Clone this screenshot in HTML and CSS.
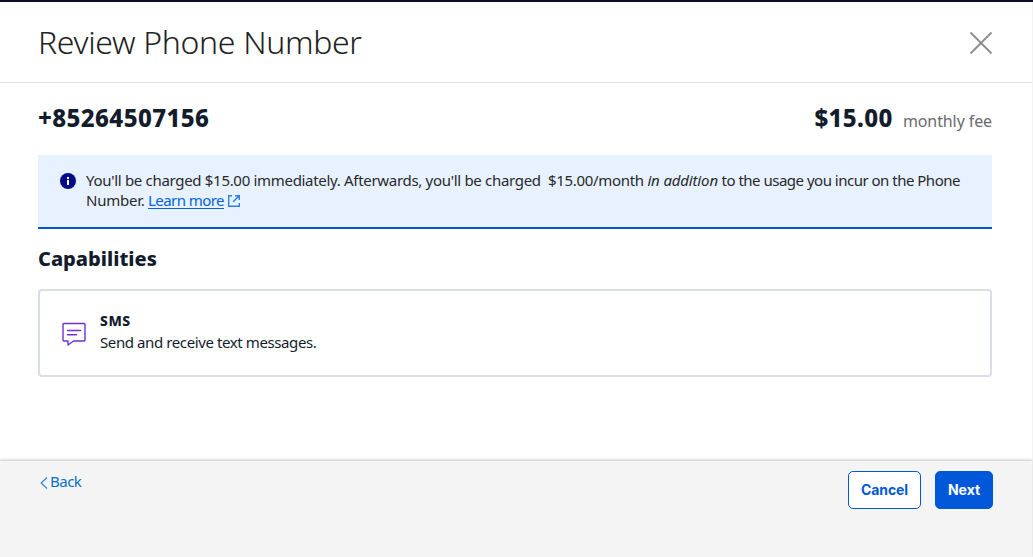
FILE: index.html
```html
<!DOCTYPE html>
<html lang="en">
<head>
<meta charset="utf-8">
<title>Review Phone Number</title>
<link rel="stylesheet" href="styles.css">
</head>
<body>
<div class="modal">
  <header class="modal-header">
    <h1 class="title"><span>Review Phone Number</span></h1>
    <svg class="close" width="24" height="24" viewBox="0 0 24 24" fill="none" stroke="#8c8c8c" stroke-width="1.8"><path d="M1.5 1.5l21 21M22.5 1.5l-21 21"/></svg>
  </header>
  <main class="content">
    <div class="summary">
      <h2 class="number">+85264507156</h2>
      <div class="price"><strong class="amount">$15.00</strong><span class="fee">monthly fee</span></div>
    </div>
    <div class="notice">
      <svg class="info" width="16" height="16" viewBox="0 0 16 16"><circle cx="8" cy="8" r="8" fill="#030b86"/><path d="M7 4h2v2H7zM7 7h2v5H7z" fill="#fff"/></svg>
      <div class="notice-text">
        <p class="line first">You'll be charged $15.00 immediately. Afterwards, you'll be charged&nbsp; $15.00/month <em>in addition</em> <span class="tail">to the usage you incur on the Phone</span></p>
        <p class="line"><span class="word">Number.</span> <a class="learn" href="#">Learn more</a><svg class="external" width="12" height="12" viewBox="0 0 12 12" fill="none" stroke="#2f80ee" stroke-width="1.4"><path d="M4 .7H.7v10.6h10.6V8M7 .7h4.3V5M11.2.8L5.2 6.8"/></svg></p>
      </div>
    </div>
    <h3 class="section-title"><span>Capabilities</span></h3>
    <div class="card">
      <svg class="sms-icon" width="24" height="24" viewBox="0 0 24 24" fill="none" stroke="#7030d0" stroke-width="1.4" stroke-linejoin="round" stroke-linecap="round"><path d="M2 1.5h20q1 0 1 1v15.500q0 1-1 1H11.500L6 23v-4H2q-1 0-1-1v-15.500q0-1 1-1zM5.500 8.500h13M5.500 12.800h9"/></svg>
      <div class="card-text">
        <h4 class="card-title">SMS</h4>
        <p class="card-desc">Send and receive text messages.</p>
      </div>
    </div>
  </main>
  <footer class="footer">
    <a class="back" href="#"><svg class="chevron" width="8" height="12" viewBox="0 0 8 12" fill="none" stroke="#2b86d2" stroke-width="1.2"><path d="M7 .5L1.2 6 7 11.500"/></svg><span>Back</span></a>
    <div class="actions">
      <button class="btn btn-cancel">Cancel</button>
      <button class="btn btn-next">Next</button>
    </div>
  </footer>
</div>
</body>
</html>
```
FILE: styles.css
```css
* { box-sizing: border-box; }
body { margin: 0; background: #f3f3f3; font-family: "Noto Sans", sans-serif; color: #121c2d; overflow: hidden; border-top: 2px solid #0d0c25; }
h1, h2, h3, h4, p { margin: 0; white-space: nowrap; }
.modal { height: 555px; margin-right: 1px; background: #fff; display: flex; flex-direction: column; }
.modal-header { height: 81px; display: flex; justify-content: space-between; align-items: center; padding: 2px 39px 0 38px; border-bottom: 1px solid #e0e0e0; }
.title { margin-bottom: 2px; font-size: 32px; line-height: 40px; font-weight: 300; letter-spacing: -0.33px; color: #222; }
.close { display: block; }
.content { flex: 1; padding: 19px 40px 0 38px; }
.summary { display: flex; justify-content: space-between; height: 53px; }
.number { font-size: 24px; line-height: 32px; font-weight: 800; letter-spacing: 0.4px; }
.price { display: flex; align-items: baseline; height: 32px; line-height: 32px; }
.amount { font-size: 24px; font-weight: 800; letter-spacing: 0.4px; }
.fee { margin-left: 10px; font-size: 16px; letter-spacing: -0.1px; color: #6b6b6b; }
.notice { height: 74px; display: flex; padding: 18px 22px 0; background: #e7f1ff; border-bottom: 2px solid #0058d8; color: #282a2b; }
.info { flex: none; }
.notice-text { margin-left: 10px; margin-top: -3px; font-size: 15px; line-height: 20px; }
.line { letter-spacing: -0.31px; }
.line em { letter-spacing: -0.15px; }
.tail { letter-spacing: -0.5px; }
.word { letter-spacing: -0.25px; }
.learn { color: #0263e0; letter-spacing: -0.56px; text-underline-offset: 2px; }
.external { margin-left: 4px; vertical-align: -1px; }
.section-title { margin-top: 16px; font-size: 20px; line-height: 28px; font-weight: 800; }
.card { height: 88px; margin-top: 16px; padding: 0 22px; display: flex; align-items: center; border: 2px solid #dadde5; border-radius: 4px; }
.sms-icon { margin-top: 2px; }
.card-text { margin-left: 14px; margin-bottom: 2px; }
.card-title { font-size: 14px; line-height: 20px; font-weight: 800; letter-spacing: 0.5px; }
.card-desc { font-size: 15px; line-height: 22px; letter-spacing: -0.4px; }
.footer { height: 97px; padding: 10px 39px 0 40px; display: flex; justify-content: space-between; align-items: flex-start; background: #f4f4f4; border-top: 1px solid #d9d9d9; box-shadow: 0 -1px 2px rgba(0,0,0,.12); }
.back { display: flex; align-items: center; gap: 2px; font-size: 15px; line-height: 20px; letter-spacing: -0.5px; color: #0670c8; text-decoration: none; }
.chevron { margin-top: 3px; }
.actions { display: flex; gap: 14px; }
.btn { height: 38px; padding: 0; border: 1px solid #0058d8; border-radius: 5px; font-family: Inter, sans-serif; font-size: 14px; font-weight: 700; line-height: 20px; }
.btn-cancel { width: 73px; background: #fff; color: #0058d8; letter-spacing: -0.1px; }
.btn-next { width: 58px; background: #0058d8; color: #fff; }
```
